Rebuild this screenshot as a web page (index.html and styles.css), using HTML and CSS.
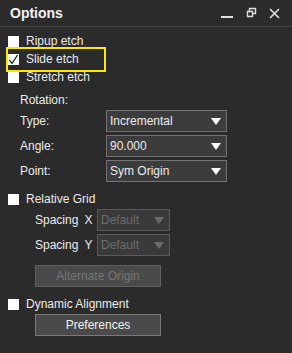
FILE: index.html
```html
<!DOCTYPE html>
<html lang="en">
<head>
  <meta charset="UTF-8" />
  <title>Options</title>
  <link rel="stylesheet" href="styles.css">
</head>
<body>
  <div class="panel">
    <div class="header">
      <span class="title">Options</span>
      <div class="winbtns">
        <svg width="13" height="12" viewBox="0 0 13 12"><rect x="0" y="9" width="12" height="2" fill="#e0e0e0"/></svg>
        <svg width="11" height="12" viewBox="0 0 11 12"><path d="M3.5 1.5h6v5h-6z" fill="none" stroke="#e0e0e0" stroke-width="1.4"/><rect x="2" y="5" width="4" height="4" fill="#2b2b2b"/><path d="M1.5 4.5h5v5h-5z" fill="none" stroke="#e0e0e0" stroke-width="1.4"/></svg>
        <svg width="11" height="11" viewBox="0 0 11 11"><path d="M1 1L10 10M10 1L1 10" stroke="#e0e0e0" stroke-width="1.6"/></svg>
      </div>
    </div>

    <div class="body">
      <div class="check"><span class="box"></span>Ripup etch</div>
      <div class="check hilite"><span class="box"><svg width="11" height="11" viewBox="0 0 11 11"><path d="M1.5 6L4 9.5L9.5 1" fill="none" stroke="#111" stroke-width="1.2"/></svg></span>Slide etch</div>
      <div class="check"><span class="box"></span>Stretch etch</div>

      <div class="label-row">Rotation:</div>
      <div class="field first"><span class="lbl">Type:</span><div class="select wide">Incremental<i class="tri"></i></div></div>
      <div class="field"><span class="lbl">Angle:</span><div class="select wide">90.000<i class="tri"></i></div></div>
      <div class="field"><span class="lbl">Point:</span><div class="select wide">Sym Origin<i class="tri"></i></div></div>

      <div class="check gap"><span class="box"></span>Relative Grid</div>
      <div class="field sub first"><span class="lbl">Spacing<b>X</b></span><div class="select small off">Default<i class="tri"></i></div></div>
      <div class="field sub"><span class="lbl">Spacing<b>Y</b></span><div class="select small off">Default<i class="tri"></i></div></div>
      <div class="btn off origin">Alternate Origin</div>

      <div class="check gap"><span class="box"></span>Dynamic Alignment</div>
      <div class="btn prefs">Preferences</div>
    </div>
  </div>
</body>
</html>
```

FILE: styles.css
```css
body { margin: 0; background: #2b2b2b; font-family: "Liberation Sans", Arial, sans-serif; font-size: 12px; color: #ececec; }
.panel { width: 292px; height: 353px; background: #2b2b2b; }
.header { height: 26px; border-bottom: 1px solid #444; display: flex; align-items: center; justify-content: space-between; padding: 0 12px 0 10px; }
.title { font-weight: bold; font-size: 14px; color: #f2f2f2; }
.winbtns { display: flex; gap: 12px; align-items: center; }
.body { padding-top: 5px; }
.check { height: 18px; display: flex; align-items: center; padding-left: 8px; position: relative; }
.check.gap { margin-top: 8px; }
.box { width: 11px; height: 11px; background: #fff; margin-right: 7px; display: flex; }
.hilite::after { content: ""; position: absolute; left: 6px; top: -3px; width: 96px; height: 21px; border: 2px solid #ffea00; }
.label-row { height: 18px; line-height: 18px; padding-left: 20px; margin-top: 5px; }
.field { display: flex; align-items: center; margin-top: 3px; padding-left: 20px; }
.field.first { margin-top: 1px; }
.field .lbl { width: 86px; }
.field.sub { padding-left: 35px; }
.field.sub .lbl { width: 62px; }
.lbl b { font-weight: normal; margin-left: 6px; }
.select { height: 20px; border: 1px solid #727272; background: #3c3c3c; display: flex; align-items: center; justify-content: space-between; padding: 0 5px 0 3px; }
.wide { width: 111px; }
.small { width: 63px; }
.select.off { background: #3a3a3a; border-color: #5a5a5a; color: #6c6c6c; }
.tri { width: 0; height: 0; border-left: 5px solid transparent; border-right: 5px solid transparent; border-top: 7px solid #fff; }
.off .tri { border-top-color: #6a6a6a; }
.btn { width: 124px; height: 20px; margin-left: 35px; border: 1px solid #7a7a7a; background: #4a4a4a; text-align: center; line-height: 20px; }
.btn.off { border-color: #5e5e5e; color: #767676; }
.origin { margin-top: 9px; }
.prefs { margin-top: 1px; color: #f2f2f2; }
```
